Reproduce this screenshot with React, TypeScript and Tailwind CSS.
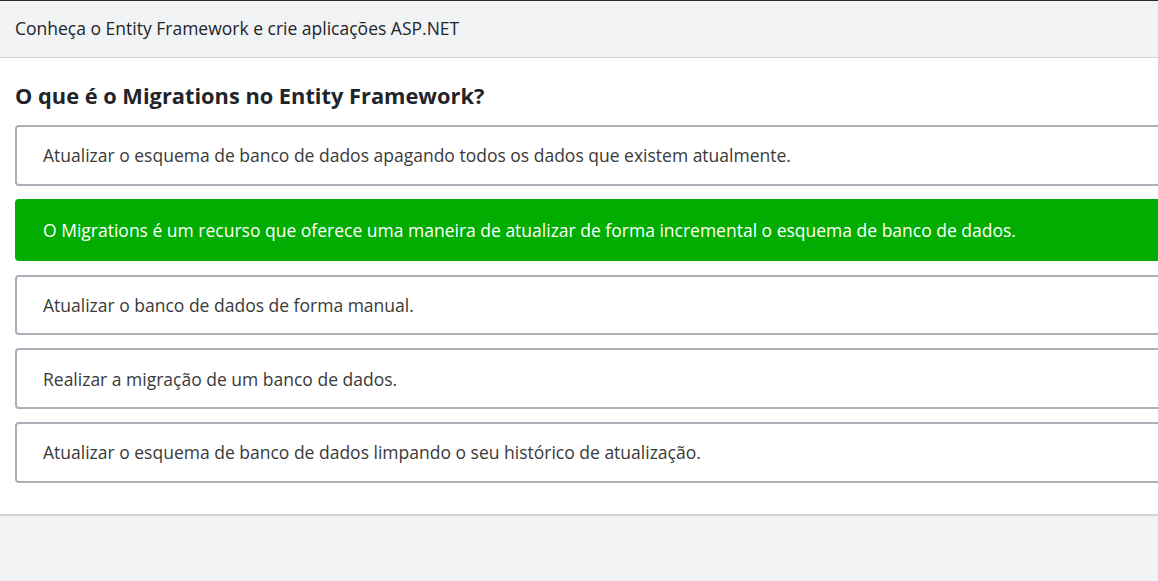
import React from "react";

const options = [
  { text: "Atualizar o esquema de banco de dados apagando todos os dados que existem atualmente.", correct: false },
  { text: "O Migrations é um recurso que oferece uma maneira de atualizar de forma incremental o esquema de banco de dados.", correct: true },
  { text: "Atualizar o banco de dados de forma manual.", correct: false },
  { text: "Realizar a migração de um banco de dados.", correct: false },
  { text: "Atualizar o esquema de banco de dados limpando o seu histórico de atualização.", correct: false },
];

export default function App() {
  return (
    <div
      className="w-[1158px] h-[581px] overflow-hidden bg-[#f2f3f5] flex flex-col"
      style={{ fontFamily: '"Open Sans", "Noto Sans", sans-serif' }}
    >
      <div className="h-[58px] shrink-0 border-t border-t-[#2b2b2b] border-b border-b-[#d0d3d7] bg-[#f2f3f5] flex items-center px-[15px]">
        <span className="text-[17.5px] text-[#212529] leading-none">Conheça o Entity Framework e crie aplicações ASP.NET</span>
      </div>
      <div className="bg-white shrink-0 h-[458px] border-b-2 border-b-[#d0d3d7] pl-[15px] pt-[23px]">
        <h1 className="text-[21.8px] font-bold text-[#212529] leading-[30px] mb-[14px]">
          O que é o Migrations no Entity Framework?
        </h1>
        <div className="w-[1170px] flex flex-col gap-[13.3px]">
          {options.map((o, i) =>
            o.correct ? (
              <div
                key={i}
                className="h-[62.5px] rounded-[4px] bg-[#00ad00] flex items-center px-[28px] text-[17.5px] text-white font-medium"
              >
                {o.text}
              </div>
            ) : (
              <div
                key={i}
                className="h-[60.5px] rounded-[4px] border-2 border-[#aab0b8] bg-white flex items-center px-[26px] text-[17.5px] text-[#3a3a3a]"
              >
                {o.text}
              </div>
            )
          )}
        </div>
      </div>
    </div>
  );
}
